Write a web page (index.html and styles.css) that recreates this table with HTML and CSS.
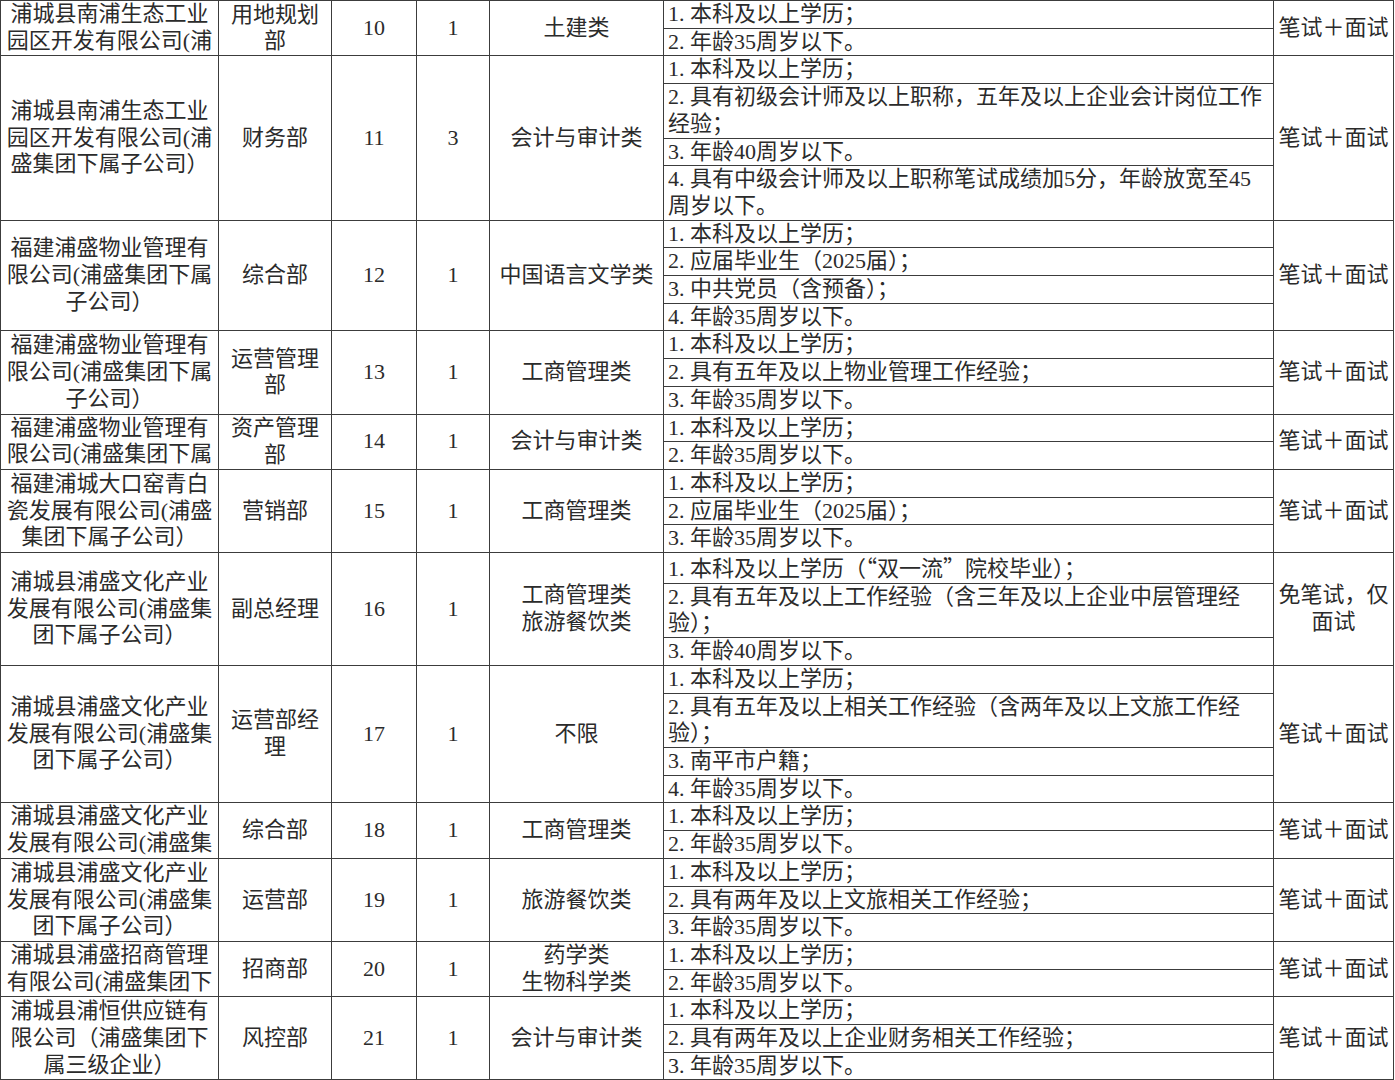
FILE: index.html
```html
<!DOCTYPE html>
<html lang="zh-CN">
<head>
<meta charset="utf-8">
<title>招聘岗位表</title>
<link rel="stylesheet" href="styles.css">
</head>
<body>
<div class="sheet">

  <div class="row">
    <div class="cell"><div class="in">浦城县南浦生态工业园区开发有限公司(浦盛集团下属子公司）</div></div>
    <div class="cell"><div class="in">用地规划部</div></div>
    <div class="cell"><div class="in">10</div></div>
    <div class="cell"><div class="in">1</div></div>
    <div class="cell"><div class="in">土建类</div></div>
    <div class="reqs">
      <div class="req">1. 本科及以上学历；</div>
      <div class="req">2. 年龄35周岁以下。</div>
    </div>
    <div class="cell"><div class="in">笔试＋面试</div></div>
  </div>

  <div class="row">
    <div class="cell"><div class="in">浦城县南浦生态工业园区开发有限公司(浦盛集团下属子公司）</div></div>
    <div class="cell"><div class="in">财务部</div></div>
    <div class="cell"><div class="in">11</div></div>
    <div class="cell"><div class="in">3</div></div>
    <div class="cell"><div class="in">会计与审计类</div></div>
    <div class="reqs">
      <div class="req">1. 本科及以上学历；</div>
      <div class="req">2. 具有初级会计师及以上职称，五年及以上企业会计岗位工作经验；</div>
      <div class="req">3. 年龄40周岁以下。</div>
      <div class="req">4. 具有中级会计师及以上职称笔试成绩加5分，年龄放宽至45周岁以下。</div>
    </div>
    <div class="cell"><div class="in">笔试＋面试</div></div>
  </div>

  <div class="row">
    <div class="cell"><div class="in">福建浦盛物业管理有限公司(浦盛集团下属子公司）</div></div>
    <div class="cell"><div class="in">综合部</div></div>
    <div class="cell"><div class="in">12</div></div>
    <div class="cell"><div class="in">1</div></div>
    <div class="cell"><div class="in">中国语言文学类</div></div>
    <div class="reqs">
      <div class="req">1. 本科及以上学历；</div>
      <div class="req">2. 应届毕业生（2025届）；</div>
      <div class="req">3. 中共党员（含预备）；</div>
      <div class="req">4. 年龄35周岁以下。</div>
    </div>
    <div class="cell"><div class="in">笔试＋面试</div></div>
  </div>

  <div class="row">
    <div class="cell"><div class="in">福建浦盛物业管理有限公司(浦盛集团下属子公司）</div></div>
    <div class="cell"><div class="in">运营管理部</div></div>
    <div class="cell"><div class="in">13</div></div>
    <div class="cell"><div class="in">1</div></div>
    <div class="cell"><div class="in">工商管理类</div></div>
    <div class="reqs">
      <div class="req">1. 本科及以上学历；</div>
      <div class="req">2. 具有五年及以上物业管理工作经验；</div>
      <div class="req">3. 年龄35周岁以下。</div>
    </div>
    <div class="cell"><div class="in">笔试＋面试</div></div>
  </div>

  <div class="row">
    <div class="cell"><div class="in">福建浦盛物业管理有限公司(浦盛集团下属子公司）</div></div>
    <div class="cell"><div class="in">资产管理部</div></div>
    <div class="cell"><div class="in">14</div></div>
    <div class="cell"><div class="in">1</div></div>
    <div class="cell"><div class="in">会计与审计类</div></div>
    <div class="reqs">
      <div class="req">1. 本科及以上学历；</div>
      <div class="req">2. 年龄35周岁以下。</div>
    </div>
    <div class="cell"><div class="in">笔试＋面试</div></div>
  </div>

  <div class="row">
    <div class="cell"><div class="in">福建浦城大口窑青白瓷发展有限公司(浦盛集团下属子公司）</div></div>
    <div class="cell"><div class="in">营销部</div></div>
    <div class="cell"><div class="in">15</div></div>
    <div class="cell"><div class="in">1</div></div>
    <div class="cell"><div class="in">工商管理类</div></div>
    <div class="reqs">
      <div class="req">1. 本科及以上学历；</div>
      <div class="req">2. 应届毕业生（2025届）；</div>
      <div class="req">3. 年龄35周岁以下。</div>
    </div>
    <div class="cell"><div class="in">笔试＋面试</div></div>
  </div>

  <div class="row">
    <div class="cell"><div class="in">浦城县浦盛文化产业发展有限公司(浦盛集团下属子公司）</div></div>
    <div class="cell"><div class="in">副总经理</div></div>
    <div class="cell"><div class="in">16</div></div>
    <div class="cell"><div class="in">1</div></div>
    <div class="cell"><div class="in">工商管理类<br>旅游餐饮类</div></div>
    <div class="reqs">
      <div class="req">1. 本科及以上学历（<span class="q">“</span>双一流<span class="q">”</span>院校毕业）；</div>
      <div class="req">2. 具有五年及以上工作经验（含三年及以上企业中层管理经验）；</div>
      <div class="req">3. 年龄40周岁以下。</div>
    </div>
    <div class="cell"><div class="in">免笔试，仅面试</div></div>
  </div>

  <div class="row">
    <div class="cell"><div class="in">浦城县浦盛文化产业发展有限公司(浦盛集团下属子公司）</div></div>
    <div class="cell"><div class="in">运营部经理</div></div>
    <div class="cell"><div class="in">17</div></div>
    <div class="cell"><div class="in">1</div></div>
    <div class="cell"><div class="in">不限</div></div>
    <div class="reqs">
      <div class="req">1. 本科及以上学历；</div>
      <div class="req">2. 具有五年及以上相关工作经验（含两年及以上文旅工作经验）；</div>
      <div class="req">3. 南平市户籍；</div>
      <div class="req">4. 年龄35周岁以下。</div>
    </div>
    <div class="cell"><div class="in">笔试＋面试</div></div>
  </div>

  <div class="row">
    <div class="cell"><div class="in">浦城县浦盛文化产业发展有限公司(浦盛集团下属子公司）</div></div>
    <div class="cell"><div class="in">综合部</div></div>
    <div class="cell"><div class="in">18</div></div>
    <div class="cell"><div class="in">1</div></div>
    <div class="cell"><div class="in">工商管理类</div></div>
    <div class="reqs">
      <div class="req">1. 本科及以上学历；</div>
      <div class="req">2. 年龄35周岁以下。</div>
    </div>
    <div class="cell"><div class="in">笔试＋面试</div></div>
  </div>

  <div class="row">
    <div class="cell"><div class="in">浦城县浦盛文化产业发展有限公司(浦盛集团下属子公司）</div></div>
    <div class="cell"><div class="in">运营部</div></div>
    <div class="cell"><div class="in">19</div></div>
    <div class="cell"><div class="in">1</div></div>
    <div class="cell"><div class="in">旅游餐饮类</div></div>
    <div class="reqs">
      <div class="req">1. 本科及以上学历；</div>
      <div class="req">2. 具有两年及以上文旅相关工作经验；</div>
      <div class="req">3. 年龄35周岁以下。</div>
    </div>
    <div class="cell"><div class="in">笔试＋面试</div></div>
  </div>

  <div class="row">
    <div class="cell"><div class="in">浦城县浦盛招商管理有限公司(浦盛集团下属子公司）</div></div>
    <div class="cell"><div class="in">招商部</div></div>
    <div class="cell"><div class="in">20</div></div>
    <div class="cell"><div class="in">1</div></div>
    <div class="cell"><div class="in">药学类<br>生物科学类</div></div>
    <div class="reqs">
      <div class="req">1. 本科及以上学历；</div>
      <div class="req">2. 年龄35周岁以下。</div>
    </div>
    <div class="cell"><div class="in">笔试＋面试</div></div>
  </div>

  <div class="row">
    <div class="cell"><div class="in">浦城县浦恒供应链有限公司（浦盛集团下属三级企业）</div></div>
    <div class="cell"><div class="in">风控部</div></div>
    <div class="cell"><div class="in">21</div></div>
    <div class="cell"><div class="in">1</div></div>
    <div class="cell"><div class="in">会计与审计类</div></div>
    <div class="reqs">
      <div class="req">1. 本科及以上学历；</div>
      <div class="req">2. 具有两年及以上企业财务相关工作经验；</div>
      <div class="req">3. 年龄35周岁以下。</div>
    </div>
    <div class="cell"><div class="in">笔试＋面试</div></div>
  </div>

</div>
</body>
</html>
```

FILE: styles.css
```css
* {
  box-sizing: border-box;
}

html,
body {
  margin: 0;
  padding: 0;
  background: #ffffff;
}

body {
  font-family: "Liberation Serif", "Noto Sans CJK SC", serif;
  font-size: 22px;
  color: #2b2b2b;
}

.sheet {
  width: 1394px;
  border-top: 1px solid #3c3c3c;
  border-left: 1px solid #3c3c3c;
}

.row {
  display: grid;
  grid-template-columns: 218px 113px 85px 73px 174px 610px 120px;
}

.cell {
  contain: size;
  overflow: hidden;
  display: flex;
  flex-direction: column;
  padding: 0 3px;
  text-align: center;
  border-right: 1px solid #3c3c3c;
  border-bottom: 1px solid #3c3c3c;
}

.cell > .in {
  margin: auto 0;
  line-height: 26.7px;
}

.reqs {
  display: flex;
  flex-direction: column;
  border-right: 1px solid #3c3c3c;
}

.req {
  padding: 0 4px 0 4px;
  line-height: 26.7px;
  text-align: left;
  border-bottom: 1px solid #3c3c3c;
}

.q {
  font-family: "Noto Sans CJK SC", sans-serif;
}
```
